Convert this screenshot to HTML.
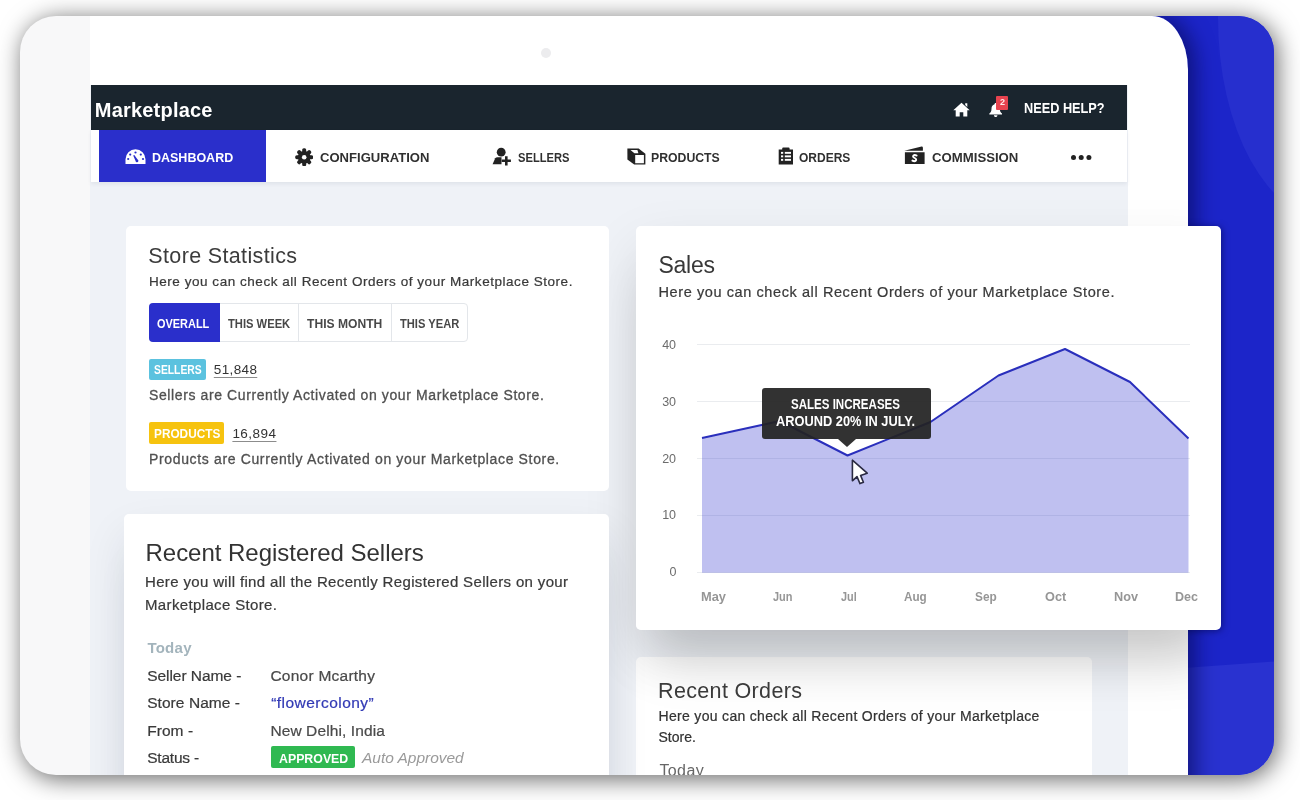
<!DOCTYPE html>
<html>
<head>
<meta charset="utf-8">
<title>Marketplace Dashboard</title>
<style>
*{box-sizing:border-box;margin:0;padding:0}
html,body{width:1300px;height:800px;overflow:hidden;background:#fff}
body{font-family:"Liberation Sans",sans-serif;color:#333;position:relative}
.frame{position:absolute;left:20px;top:16px;width:1254px;height:759px;border-radius:36px;overflow:hidden;background:#f8f8f9;box-shadow:3px 3.5px 24px rgba(0,0,0,.6)}
.stage{will-change:transform;position:absolute;left:-20px;top:-16px;width:1300px;height:800px}
.abs{position:absolute}
.t{position:absolute;white-space:nowrap;line-height:1}
.blue{left:1140px;top:0;width:170px;height:800px;background:#1c25c9}
.blue2{left:1180px;top:664px;width:120px;height:160px;background:#2932d0;transform:skewY(-4deg)}
.tablet{left:90px;top:16px;width:1098px;height:800px;background:#fff;border-top-right-radius:36px 54px}
.tshadow{left:90px;top:16px;width:1098px;height:800px;border-top-right-radius:36px 54px;box-shadow:8px 0 20px rgba(6,8,80,.6);clip-path:inset(-20px -60px -20px 1000px)}
.screen{left:90px;top:85px;width:1038px;height:720px;background:#eff2f7}
.hdr{left:90.7px;top:85px;width:1036.6px;height:45px;background:#1a252e}
.nav{left:90.7px;top:130px;width:1036.6px;height:52px;background:#fff;box-shadow:0 2px 4px rgba(40,50,80,.08)}
.tabon{left:98.6px;top:130px;width:167.4px;height:51.8px;background:#2a2fcb}
.navt{top:150.8px;font-size:13.5px;font-weight:bold;color:#303030;transform-origin:0 50%}
.card{position:absolute;background:#fff;border-radius:5px}
</style>
</head>
<body>
<div class="frame"><div class="stage">
  <div class="abs blue"></div>
  <div class="abs blue2"></div>
  <div class="abs" style="left:1218px;top:-184px;width:224px;height:404px;border-radius:50%;background:#262fce"></div>
  <div class="abs tshadow"></div>
  <div class="abs tablet"></div>
  <div class="abs screen"></div>
  <div class="abs" style="left:541px;top:48px;width:10px;height:10px;border-radius:50%;background:#ececee"></div>
  <div class="abs hdr"></div>
  <div class="abs nav"></div>
  <div class="abs tabon"></div>


  <!-- header content -->
  <div class="t" id="brand" style="left:94.8px;top:100px;font-size:20px;font-weight:bold;color:#fff;letter-spacing:.2px">Marketplace</div>
  <svg class="abs" id="ihome" style="left:953px;top:101.5px" width="17" height="15" viewBox="0 0 17 15"><path fill="#fff" d="M8.5 0.8 L16.7 8.2 H14.3 V14.6 H10.3 V10.2 H6.7 V14.6 H2.7 V8.2 H0.3 Z M12.2 1.2 h2.1 v3.8 l-2.1 -1.9 Z"/></svg>
  <svg class="abs" id="ibell" style="left:989px;top:101.5px" width="14.2" height="16" viewBox="0 0 17 19"><path fill="#fff" d="M8 1.2 C8.8 1.2 9.3 1.7 9.3 2.5 C12 3.2 13 5.4 13 8 C13 11 14 12.6 15.6 13.8 V14.8 H0.4 V13.8 C2 12.6 3 11 3 8 C3 5.4 4 3.2 6.7 2.5 C6.7 1.7 7.2 1.2 8 1.2 Z M5.9 15.8 H10.1 C10.1 17 9.2 18 8 18 C6.8 18 5.9 17 5.9 15.8 Z"/></svg>
  <div class="abs" id="badge" style="left:996.3px;top:96.3px;width:11.7px;height:13.5px;background:#e8434f;border-radius:1px"></div>
  <div class="t" style="left:1000px;top:98.3px;font-size:9px;font-weight:bold;color:#ffe9ea">2</div>
  <div class="t" id="help" style="left:1024px;top:101.2px;font-size:14px;font-weight:bold;color:#fff;transform-origin:0 50%;transform:scaleX(.909)">NEED HELP?</div>

  <!-- nav content -->
  <div class="t navt" id="n1" style="left:152px;transform:scaleX(0.925);color:#fff">DASHBOARD</div>
  <div class="t navt" id="n2" style="left:320px;transform:scaleX(0.968)">CONFIGURATION</div>
  <div class="t navt" id="n3" style="left:517.5px;transform:scaleX(0.827)">SELLERS</div>
  <div class="t navt" id="n4" style="left:651px;transform:scaleX(0.908)">PRODUCTS</div>
  <div class="t navt" id="n5" style="left:798.5px;transform:scaleX(0.889)">ORDERS</div>
  <div class="t navt" id="n6" style="left:931.5px;transform:scaleX(0.976)">COMMISSION</div>
  <div class="abs" style="left:1071px;top:154.5px;width:5px;height:5px;border-radius:50%;background:#222;box-shadow:7.7px 0 0 #222,15.4px 0 0 #222"></div>


  <!-- nav icons -->
  <svg class="abs" id="idash" style="left:125px;top:149px" width="21" height="15.5" viewBox="0 0 21 15.5"><path fill="#fff" d="M0.5 15 V10.3 A10 10 0 0 1 20.5 10.3 V15 Z"/><g fill="#2a2fcb"><circle cx="10.5" cy="3.5" r="1.1"/><circle cx="5.2" cy="5.6" r="1.1"/><circle cx="15.8" cy="5.6" r="1.1"/><circle cx="3.2" cy="10" r="1.1"/><circle cx="18" cy="10" r="1.1"/><path d="M8.2 6.6 L9.3 6 L12.6 10.6 A1.4 1.4 0 1 1 10.6 11.9 Z"/></g></svg>
  <svg class="abs" id="igear" style="left:295px;top:147.5px" width="18.4" height="18.4" viewBox="-9.2 -9.2 18.4 18.4"><g fill="#222"><circle r="6.3"/><rect x="-2" y="-9" width="4" height="18" rx="1.6"/><rect x="-9" y="-2" width="18" height="4" rx="1.6"/><g transform="rotate(45)"><rect x="-2" y="-9" width="4" height="18" rx="1.6"/><rect x="-9" y="-2" width="18" height="4" rx="1.6"/></g></g><circle r="2.3" fill="#fff"/></svg>
  <svg class="abs" id="isell" style="left:492px;top:147px" width="20" height="19" viewBox="0 0 20 19"><g fill="#222"><circle cx="9.2" cy="5.2" r="4.4"/><path d="M0.6 17.2 L3.2 11.2 Q4 10.2 5.5 10.2 H9.5 V17.2 Z"/><path d="M13 9.2 h2.6 v3.3 h3.3 v2.6 h-3.3 v3.3 h-2.6 v-3.3 h-3.3 v-2.6 h3.3 Z"/></g><path d="M10.2 10 L11.8 11.4 L9.8 13.6 V17.5 H10.4" fill="none" stroke="#fff" stroke-width="0"/></svg>
  <svg class="abs" id="iprod" style="left:627px;top:148px" width="19" height="17" viewBox="0 0 19 17"><path fill="#222" d="M0.4 0.6 H11.6 L18.4 5.8 V16.6 H7.2 L0.4 11.6 Z"/><path fill="#fff" d="M3.5 1.9 H10.4 L11.4 5.3 H7.4 Z M8.2 6.9 H16.9 V15.2 H8.2 Z"/></svg>
  <svg class="abs" id="iord" style="left:778px;top:146.5px" width="16" height="18" viewBox="0 0 16 18"><path fill="#222" d="M0.7 2.6 H4.2 V1.4 Q4.2 0.4 5.2 0.4 H10.6 Q11.6 0.4 11.6 1.4 V2.6 H15 V17.6 H0.7 Z"/><g fill="#fff"><rect x="3" y="4.9" width="2.2" height="1.9"/><rect x="6.8" y="4.9" width="6.2" height="1.9"/><rect x="3" y="8.4" width="2.2" height="1.9"/><rect x="6.8" y="8.4" width="6.2" height="1.9"/><rect x="3" y="11.9" width="2.2" height="1.9"/><rect x="6.8" y="11.9" width="6.2" height="1.9"/></g></svg>
  <svg class="abs" id="icomm" style="left:904px;top:146px" width="22" height="19" viewBox="0 0 22 19"><path fill="#222" d="M0.9 6.2 H20.6 V18 H0.9 Z M0.3 4.7 L17.6 0.6 Q18.9 0.5 18.9 1.8 V4.7 Z"/><path d="M12.6 9.6 Q10.6 8.4 9.4 9.6 Q8.4 11 10.6 12 Q12.8 13 11.9 14.5 Q10.6 15.8 8.4 14.6" fill="none" stroke="#fff" stroke-width="1.9" stroke-linecap="round"/></svg>

  <!-- cards -->
  <div class="card" id="c4" style="left:636px;top:657px;width:456px;height:160px"></div>
  <div class="abs" style="left:90px;top:16px;width:1098px;height:800px;overflow:hidden">
    <div class="abs" style="left:546px;top:210px;width:585px;height:404px;border-radius:5px;box-shadow:0 22px 56px rgba(0,0,0,.10),0 45px 50px -15px rgba(0,0,0,.145)"></div>
    <div class="abs" style="left:34px;top:498px;width:485px;height:300px;border-radius:5px;box-shadow:0 20px 44px rgba(20,30,60,.09),0 40px 40px -15px rgba(20,30,60,.12)"></div>
  </div>
  <div class="abs" style="left:1188px;top:16px;width:112px;height:800px;overflow:hidden">
    <div class="abs" style="left:-552px;top:210px;width:585px;height:404px;border-radius:5px;box-shadow:1px 1px 7px rgba(4,6,60,.55)"></div>
  </div>
  <div class="card" id="c1" style="left:126px;top:226px;width:483px;height:265px"></div>
  <div class="card" id="c2" style="left:124px;top:514px;width:485px;height:300px"></div>
  <div class="card" id="c3" style="left:636px;top:226px;width:585px;height:404px"></div>

  <!-- SHAPES START -->
  <!-- tabs -->
  <div class="abs" style="left:149px;top:303px;width:319px;height:39px;border:1px solid #e3e6ea;border-radius:4px;background:#fff"></div>
  <div class="abs" style="left:149px;top:303px;width:70.5px;height:39px;background:#2a2fcb;border-radius:4px 0 0 4px"></div>
  <div class="abs" style="left:298px;top:303px;width:1px;height:39px;background:#e3e6ea"></div>
  <div class="abs" style="left:391.3px;top:303px;width:1px;height:39px;background:#e3e6ea"></div>
  <!-- badges -->
  <div class="abs" style="left:149px;top:358.5px;width:57px;height:21.5px;background:#5bc2df;border-radius:2px"></div>
  <div class="abs" style="left:149px;top:422px;width:75.4px;height:21.5px;background:#f6c30f;border-radius:2px"></div>
  <div class="abs" style="left:270.7px;top:746.3px;width:84.4px;height:21.7px;background:#2fb951;border-radius:2px"></div>
  <!-- chart -->
  <svg class="abs" style="left:636px;top:226px;z-index:4" width="585" height="404" viewBox="636 226 585 404">
    <g stroke="#eaecef" stroke-width="1"><path d="M697 344.5H1190M697 401.5H1190M697 458.5H1190M697 515.5H1190M697 572.5H1190"/></g>
    <path d="M702 438 L780 421 L847.5 455.5 L930.5 422 L998.5 375.5 L1065 349 L1130 382 L1188.5 438.5 V572.8 H702 Z" fill="#2b30cc" fill-opacity=".3"/>
    <path d="M702 438 L780 421 L847.5 455.5 L930.5 422 L998.5 375.5 L1065 349 L1130 382 L1188.5 438.5" fill="none" stroke="#2a2fbc" stroke-width="2" stroke-linejoin="round"/>
  </svg>
  <!-- tooltip -->
  <div class="abs" style="left:761.7px;top:388px;width:169.6px;height:50.8px;background:rgba(34,34,34,.93);border-radius:3px;z-index:5"></div>
  <div class="abs" style="left:837.5px;top:438.5px;width:0;height:0;border-left:9px solid transparent;border-right:9px solid transparent;border-top:8px solid rgba(34,34,34,.93);z-index:5"></div>
  <!-- cursor -->
  <svg class="abs" style="left:850px;top:458px;z-index:7" width="20" height="28" viewBox="0 0 20 28"><path d="M2.4 2.2 V22.8 L7 18.6 L10 25.6 L13.4 24.2 L10.6 17.4 L17.2 15.2 Z" fill="#fff" stroke="#2a2a42" stroke-width="1.6" stroke-linejoin="round"/></svg>
  <!-- SHAPES END -->
  <!-- TEXTS START -->
  <div class="t" id="s_title" style="left:148.3px;top:246.0px;font-size:21.5px;color:#3c3c3c;letter-spacing:0.354px;">Store Statistics</div>
  <div class="t" id="s_sub" style="left:149.0px;top:275.0px;font-size:13.5px;color:#3a3a3a;letter-spacing:0.536px;-webkit-text-stroke:.22px #3a3a3a;">Here you can check all Recent Orders of your Marketplace Store.</div>
  <div class="t" id="tb1" style="left:157.0px;top:317.0px;font-size:13px;color:#fff;font-weight:bold;transform-origin:0 50%;transform:scaleX(0.842);">OVERALL</div>
  <div class="t" id="tb2" style="left:227.6px;top:317.0px;font-size:13px;color:#484848;font-weight:bold;transform-origin:0 50%;transform:scaleX(0.861);">THIS WEEK</div>
  <div class="t" id="tb3" style="left:307.4px;top:317.0px;font-size:13px;color:#484848;font-weight:bold;transform-origin:0 50%;transform:scaleX(0.931);">THIS MONTH</div>
  <div class="t" id="tb4" style="left:399.7px;top:317.0px;font-size:13px;color:#484848;font-weight:bold;transform-origin:0 50%;transform:scaleX(0.858);">THIS YEAR</div>
  <div class="t" id="b_sel" style="left:153.5px;top:364.0px;font-size:12.5px;color:#fff;font-weight:bold;transform-origin:0 50%;transform:scaleX(0.827);">SELLERS</div>
  <div class="t" id="n_sel" style="left:213.8px;top:363.0px;font-size:13.5px;color:#333;letter-spacing:0.361px;text-decoration:underline;text-underline-offset:2.5px;text-decoration-color:#8c8c8c;text-decoration-thickness:1.2px;">51,848</div>
  <div class="t" id="d_sel" style="left:149.0px;top:388.0px;font-size:14px;color:#505050;letter-spacing:0.606px;-webkit-text-stroke:.3px #505050;">Sellers are Currently Activated on your Marketplace Store.</div>
  <div class="t" id="b_pro" style="left:153.5px;top:428.0px;font-size:12.5px;color:#fff;font-weight:bold;transform-origin:0 50%;transform:scaleX(0.945);">PRODUCTS</div>
  <div class="t" id="n_pro" style="left:232.4px;top:427.0px;font-size:13.5px;color:#333;letter-spacing:0.461px;text-decoration:underline;text-underline-offset:2.5px;text-decoration-color:#8c8c8c;text-decoration-thickness:1.2px;">16,894</div>
  <div class="t" id="d_pro" style="left:149.0px;top:452.0px;font-size:14px;color:#505050;letter-spacing:0.646px;-webkit-text-stroke:.3px #505050;">Products are Currently Activated on your Marketplace Store.</div>
  <div class="t" id="sa_title" style="left:658.4px;top:254.0px;font-size:23px;color:#383838;letter-spacing:-0.237px;">Sales</div>
  <div class="t" id="sa_sub" style="left:658.5px;top:285.0px;font-size:14.5px;color:#3a3a3a;letter-spacing:0.594px;-webkit-text-stroke:.22px #3a3a3a;">Here you can check all Recent Orders of your Marketplace Store.</div>
  <div class="t" id="y40" style="left:662.3px;top:339.0px;font-size:12.5px;color:#6c6c6c;letter-spacing:-0.206px;">40</div>
  <div class="t" id="y30" style="left:662.3px;top:396.0px;font-size:12.5px;color:#6c6c6c;letter-spacing:-0.206px;">30</div>
  <div class="t" id="y20" style="left:662.3px;top:453.0px;font-size:12.5px;color:#6c6c6c;letter-spacing:-0.206px;">20</div>
  <div class="t" id="y10" style="left:662.3px;top:509.0px;font-size:12.5px;color:#6c6c6c;letter-spacing:-0.206px;">10</div>
  <div class="t" id="y0" style="left:669.5px;top:566.0px;font-size:12.5px;color:#6c6c6c;letter-spacing:-0.453px;">0</div>
  <div class="t" id="m1" style="left:700.8px;top:590.0px;font-size:13px;color:#969696;font-weight:bold;transform-origin:0 50%;transform:scaleX(0.988);">May</div>
  <div class="t" id="m2" style="left:772.5px;top:590.0px;font-size:13px;color:#969696;font-weight:bold;transform-origin:0 50%;transform:scaleX(0.843);">Jun</div>
  <div class="t" id="m3" style="left:840.8px;top:590.0px;font-size:13px;color:#969696;font-weight:bold;transform-origin:0 50%;transform:scaleX(0.838);">Jul</div>
  <div class="t" id="m4" style="left:904.0px;top:590.0px;font-size:13px;color:#969696;font-weight:bold;transform-origin:0 50%;transform:scaleX(0.900);">Aug</div>
  <div class="t" id="m5" style="left:975.2px;top:590.0px;font-size:13px;color:#969696;font-weight:bold;transform-origin:0 50%;transform:scaleX(0.910);">Sep</div>
  <div class="t" id="m6" style="left:1044.8px;top:590.0px;font-size:13px;color:#969696;font-weight:bold;transform-origin:0 50%;transform:scaleX(0.978);">Oct</div>
  <div class="t" id="m7" style="left:1114.0px;top:590.0px;font-size:13px;color:#969696;font-weight:bold;transform-origin:0 50%;transform:scaleX(0.977);">Nov</div>
  <div class="t" id="m8" style="left:1175.3px;top:590.0px;font-size:13px;color:#969696;font-weight:bold;transform-origin:0 50%;transform:scaleX(0.964);">Dec</div>
  <div class="t" id="tt1" style="left:791.0px;top:397.0px;font-size:14px;color:#fff;font-weight:bold;transform-origin:0 50%;transform:scaleX(0.824);z-index:6;">SALES INCREASES</div>
  <div class="t" id="tt2" style="left:776.0px;top:414.0px;font-size:14px;color:#fff;font-weight:bold;transform-origin:0 50%;transform:scaleX(0.915);z-index:6;">AROUND 20% IN JULY.</div>
  <div class="t" id="r_title" style="left:145.5px;top:541.0px;font-size:24px;color:#333;letter-spacing:-0.023px;">Recent Registered Sellers</div>
  <div class="t" id="r_sub1" style="left:145.0px;top:574.0px;font-size:15px;color:#3a3a3a;letter-spacing:0.347px;-webkit-text-stroke:.22px #3a3a3a;">Here you will find all the Recently Registered Sellers on your</div>
  <div class="t" id="r_sub2" style="left:145.0px;top:597.0px;font-size:15px;color:#3a3a3a;letter-spacing:0.359px;-webkit-text-stroke:.22px #3a3a3a;">Marketplace Store.</div>
  <div class="t" id="r_today" style="left:147.4px;top:640.0px;font-size:15px;color:#a3b4bc;font-weight:bold;letter-spacing:0.259px;">Today</div>
  <div class="t" id="r_l1" style="left:147.2px;top:668.0px;font-size:15.5px;color:#3a3a3a;letter-spacing:-0.054px;-webkit-text-stroke:.22px #3a3a3a;">Seller Name -</div>
  <div class="t" id="r_v1" style="left:270.4px;top:668.0px;font-size:15.5px;color:#4a4a4a;letter-spacing:0.245px;-webkit-text-stroke:.22px #4a4a4a;">Conor Mcarthy</div>
  <div class="t" id="r_l2" style="left:147.2px;top:695.0px;font-size:15.5px;color:#3a3a3a;letter-spacing:0.057px;-webkit-text-stroke:.22px #3a3a3a;">Store Name -</div>
  <div class="t" id="r_v2" style="left:271.2px;top:695.0px;font-size:15.5px;color:#323ab5;letter-spacing:0.463px;-webkit-text-stroke:.22px #323ab5;">“flowercolony”</div>
  <div class="t" id="r_l3" style="left:147.2px;top:723.0px;font-size:15.5px;color:#3a3a3a;letter-spacing:0.052px;-webkit-text-stroke:.22px #3a3a3a;">From -</div>
  <div class="t" id="r_v3" style="left:270.4px;top:723.0px;font-size:15.5px;color:#4a4a4a;letter-spacing:0.103px;-webkit-text-stroke:.22px #4a4a4a;">New Delhi, India</div>
  <div class="t" id="r_l4" style="left:147.2px;top:750.0px;font-size:15.5px;color:#3a3a3a;letter-spacing:-0.203px;-webkit-text-stroke:.22px #3a3a3a;">Status -</div>
  <div class="t" id="r_b" style="left:278.7px;top:752.0px;font-size:13.5px;color:#fff;font-weight:bold;transform-origin:0 50%;transform:scaleX(0.914);">APPROVED</div>
  <div class="t" id="r_auto" style="left:362.0px;top:750.0px;font-size:15.5px;color:#9a9a9a;letter-spacing:-0.022px;font-style:italic;">Auto Approved</div>
  <div class="t" id="o_title" style="left:658.0px;top:681.0px;font-size:21.5px;color:#3a3a3a;letter-spacing:0.349px;">Recent Orders</div>
  <div class="t" id="o_sub1" style="left:658.5px;top:709.0px;font-size:14px;color:#333;letter-spacing:0.318px;-webkit-text-stroke:.22px #333;">Here you can check all Recent Orders of your Marketplace</div>
  <div class="t" id="o_sub2" style="left:658.5px;top:730.0px;font-size:14px;color:#333;letter-spacing:0.028px;-webkit-text-stroke:.22px #333;">Store.</div>
  <div class="t" id="o_today" style="left:659.4px;top:763.0px;font-size:16px;color:#666;letter-spacing:0.399px;">Today</div>
  <!-- TEXTS END -->
</div></div>
</body>
</html>
